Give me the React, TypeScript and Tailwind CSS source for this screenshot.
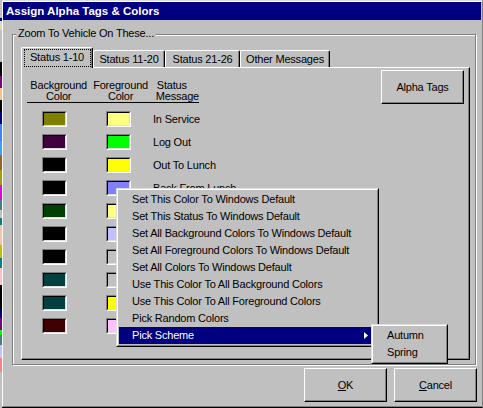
import React from "react";

const strip = [
  "h-[18px] bg-[#c0c0c0]",
  "h-[3px] bg-[#000080]",
  "h-[9px] bg-[#e0d8c0]",
  "h-[32px] bg-[#c0c0c0]",
  "h-[14px] bg-[#000000]",
  "h-[12px] bg-[#800080]",
  "h-[12px] bg-[#ffc080]",
  "h-[12px] bg-[#000000]",
  "h-[12px] bg-[#000080]",
  "h-[17px] bg-[#4080ff]",
  "h-[14px] bg-[#40a0ff]",
  "h-[15px] bg-[#a06020]",
  "h-[15px] bg-[#a0a000]",
  "h-[15px] bg-[#e000e0]",
  "h-[10px] bg-[#408080]",
  "h-[8px] bg-[#c0c0c0]",
  "h-[7px] bg-[#008080]",
  "h-[20px] bg-[#ffc0a0]",
  "h-[13px] bg-[#c0c000]",
  "h-[10px] bg-[#008080]",
  "h-[17px] bg-[#ffc0c0]",
  "h-[25px] bg-[#000000]",
  "h-[8px] bg-[#000080]",
  "h-[12px] bg-[#800080]",
  "h-[5px] bg-[#00ff00]",
  "h-[10px] bg-[#408080]",
  "h-[13px] bg-[#c0c0ff]",
  "h-[14px] bg-[#ff8080]",
  "h-[36px] bg-[#c0c0c0]",
];

const rows = [
  { bg: "bg-[#808000]", fg: "bg-[#ffff80]", label: "In Service" },
  { bg: "bg-[#400040]", fg: "bg-[#00ff00]", label: "Log Out" },
  { bg: "bg-[#000000]", fg: "bg-[#ffff00]", label: "Out To Lunch" },
  { bg: "bg-[#000000]", fg: "bg-[#8080ff]", label: "Back From Lunch" },
  { bg: "bg-[#004000]", fg: "bg-[#ffff80]", label: "" },
  { bg: "bg-[#000000]", fg: "bg-[#c0c0ff]", label: "" },
  { bg: "bg-[#000000]", fg: "bg-[#c0c0c0]", label: "" },
  { bg: "bg-[#004040]", fg: "bg-[#c0c0c0]", label: "" },
  { bg: "bg-[#004040]", fg: "bg-[#ffff00]", label: "" },
  { bg: "bg-[#400000]", fg: "bg-[#ffc0ff]", label: "" },
];

const menuItems = [
  "Set This Color To Windows Default",
  "Set This Status To Windows Default",
  "Set All Background Colors To Windows Default",
  "Set All Foreground Colors To Windows Default",
  "Set All Colors To Windows Default",
  "Use This Color To All Background Colors",
  "Use This Color To All Foreground Colors",
  "Pick Random Colors",
];

function Swatch({ color }: { color: string }) {
  return (
    <div className="h-[16px] w-[25px] border border-t-[#808080] border-l-[#808080] border-b-white border-r-white">
      <div className={`h-full w-full border border-t-black border-l-black border-b-[#dfdfdf] border-r-[#dfdfdf] ${color}`} />
    </div>
  );
}

function Button({ children, className = "" }: { children: React.ReactNode; className?: string }) {
  return (
    <div className={`flex h-[34px] w-[83px] items-center justify-center border border-t-white border-l-white border-b-black border-r-black shadow-[inset_-1px_-1px_0_#808080] ${className}`}>
      {children}
    </div>
  );
}

export default function App() {
  return (
    <div className="relative flex h-[408px] w-[483px] overflow-hidden bg-[#c0c0c0] font-['Liberation_Sans',Arial,sans-serif] text-[11px] leading-[13px] tracking-[-0.2px] text-black">
      <div className="flex w-[2px] flex-col">
        {strip.map((c, i) => (
          <div key={i} className={c} />
        ))}
      </div>

      <div className="flex w-[481px] flex-col border-t border-b border-r border-t-[#dfdfdf] border-b-black border-r-[#808080]">
        <div className="flex flex-1 flex-col border-t border-l border-b border-t-white border-l-white border-b-[#808080] pr-[1px]">
          {/* Title bar */}
          <div className="flex h-[18px] items-center bg-[#000080] pl-[3px] text-[11.5px] font-bold tracking-normal text-white">
            Assign Alpha Tags &amp; Colors
          </div>

          {/* Body */}
          <div className="flex flex-1 flex-col pl-[9px] pt-[14px]">
            {/* Group box */}
            <div className="relative h-[331px] w-[464px] border border-[#808080] pl-[8px] pt-[12px] shadow-[inset_1px_1px_0_white,1px_1px_0_white]">
              <div className="absolute left-[3px] top-[-8px] bg-[#c0c0c0] px-[2px]">
                Zoom To Vehicle On These...
              </div>

              {/* Tabs */}
              <div className="flex h-[20px] items-end">
                <div className="relative z-10 mb-[-1px] flex h-[21px] w-[72px] items-center justify-center rounded-t-[2px] border-t border-l border-r border-t-white border-l-white border-r-black bg-[#c0c0c0] pb-[1px] shadow-[inset_-1px_0_0_#808080]">
                  <div className="absolute bottom-[1px] left-[2px] right-[1px] top-[1px] border border-dotted border-black" />
                  Status 1-10
                </div>
                <div className="flex h-[17px] w-[72px] items-center justify-center rounded-t-[2px] border-t border-l border-r border-t-white border-l-white border-r-black shadow-[inset_-1px_0_0_#808080]">
                  Status 11-20
                </div>
                <div className="flex h-[17px] w-[75px] items-center justify-center rounded-t-[2px] border-t border-l border-r border-t-white border-l-white border-r-black shadow-[inset_-1px_0_0_#808080]">
                  Status 21-26
                </div>
                <div className="flex h-[17px] w-[90px] items-center justify-center rounded-t-[2px] border-t border-l border-r border-t-white border-l-white border-r-black shadow-[inset_-1px_0_0_#808080]">
                  Other Messages
                </div>
              </div>

              {/* Panel */}
              <div className="flex h-[293px] w-[449px] items-start border border-t-white border-l-white border-b-black border-r-black pl-[5px] pr-[5px] pt-[2px] shadow-[inset_-1px_-1px_0_#808080]">
                <div className="mt-[10px] flex flex-col">
                  <div className="flex h-[23px] w-[172px] border-b border-black leading-[11px]">
                    <div className="flex w-[64px] flex-col items-center">
                      <span>Background</span>
                      <span>Color</span>
                    </div>
                    <div className="flex w-[61px] flex-col items-center">
                      <span>Foreground</span>
                      <span>Color</span>
                    </div>
                    <div className="flex flex-col pl-[5px]">
                      <span className="pl-[1px]">Status</span>
                      <span>Message</span>
                    </div>
                  </div>
                  <div className="mt-[8px] flex flex-col gap-[7px]">
                    {rows.map((r, i) => (
                      <div key={i} className="flex h-[16px] items-center">
                        <div className="ml-[15px]">
                          <Swatch color={r.bg} />
                        </div>
                        <div className="ml-[39px]">
                          <Swatch color={r.fg} />
                        </div>
                        <span className="ml-[22px] whitespace-nowrap">{r.label}</span>
                      </div>
                    ))}
                  </div>
                </div>
                <Button className="ml-auto">Alpha Tags</Button>
              </div>
            </div>

            {/* Bottom buttons */}
            <div className="mt-[3px] flex justify-end gap-[7px] pr-[4px]">
              <Button>
                <span>
                  <span className="underline">O</span>K
                </span>
              </Button>
              <Button>
                <span>
                  <span className="underline">C</span>ancel
                </span>
              </Button>
            </div>
          </div>
        </div>
      </div>

      {/* Context menu */}
      <div className="absolute left-[116px] top-[188px] w-[263px] border border-t-[#dfdfdf] border-l-[#dfdfdf] border-b-black border-r-black bg-[#c0c0c0]">
        <div className="flex flex-col border border-t-white border-l-white border-b-[#808080] border-r-[#808080] p-[1px]">
          {menuItems.map((m) => (
            <div key={m} className="flex h-[17px] items-center whitespace-nowrap pl-[13px]">
              {m}
            </div>
          ))}
          <div className="flex h-[17px] items-center justify-between bg-[#000080] pl-[13px] pr-[8px] text-white">
            <span>Pick Scheme</span>
            <svg width="4" height="7" viewBox="0 0 4 7">
              <path d="M0 0 L4 3.5 L0 7 Z" fill="white" />
            </svg>
          </div>
        </div>
      </div>

      {/* Submenu */}
      <div className="absolute left-[371px] top-[324px] w-[77px] border border-t-[#dfdfdf] border-l-[#dfdfdf] border-b-black border-r-black bg-[#c0c0c0]">
        <div className="flex flex-col border border-t-white border-l-white border-b-[#808080] border-r-[#808080] p-[1px]">
          <div className="flex h-[17px] items-center pl-[13px]">Autumn</div>
          <div className="flex h-[17px] items-center pl-[13px]">Spring</div>
        </div>
      </div>
    </div>
  );
}
